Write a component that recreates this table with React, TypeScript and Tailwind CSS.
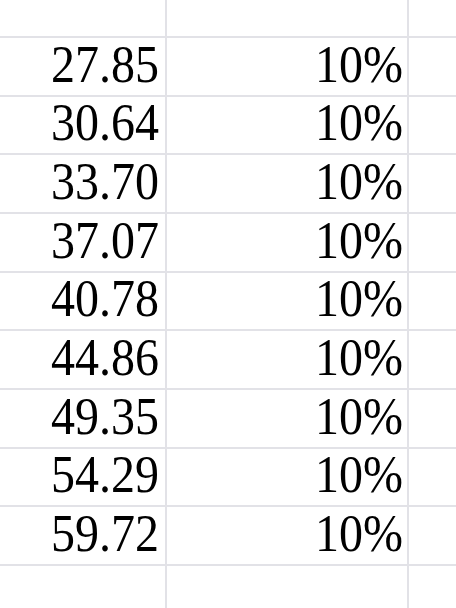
import React from "react";

const rows: [string, string][] = [
  ["27.85", "10%"],
  ["30.64", "10%"],
  ["33.70", "10%"],
  ["37.07", "10%"],
  ["40.78", "10%"],
  ["44.86", "10%"],
  ["49.35", "10%"],
  ["54.29", "10%"],
  ["59.72", "10%"],
];

export default function App() {
  return (
    <div className="w-[456px] h-[608px] overflow-hidden bg-white text-black flex flex-col font-['Liberation_Serif','Times_New_Roman',serif]">
      <div className="grid grid-cols-[167px_242px_47px] h-[38px] shrink-0 border-b-2 border-[#e2e2e7]">
        <div className="border-r-2 border-[#e2e2e7]" />
        <div className="border-r-2 border-[#e2e2e7]" />
        <div />
      </div>
      {rows.map(([a, b], i) => (
        <div
          key={i}
          className="grid grid-cols-[167px_242px_47px] h-[58.67px] shrink-0 border-b-2 border-[#e2e2e7] text-[48px] leading-none"
        >
          <div className="border-r-2 border-[#e2e2e7] flex items-center justify-end pr-[6px] pb-[3px]">
            <span className="inline-block scale-y-[1.08]">{a}</span>
          </div>
          <div className="border-r-2 border-[#e2e2e7] flex items-center justify-end pr-[4px] pb-[3px]">
            <span className="inline-block scale-y-[1.08]">{b}</span>
          </div>
          <div />
        </div>
      ))}
      <div className="grid grid-cols-[167px_242px_47px] flex-1">
        <div className="border-r-2 border-[#e2e2e7]" />
        <div className="border-r-2 border-[#e2e2e7]" />
        <div />
      </div>
    </div>
  );
}
